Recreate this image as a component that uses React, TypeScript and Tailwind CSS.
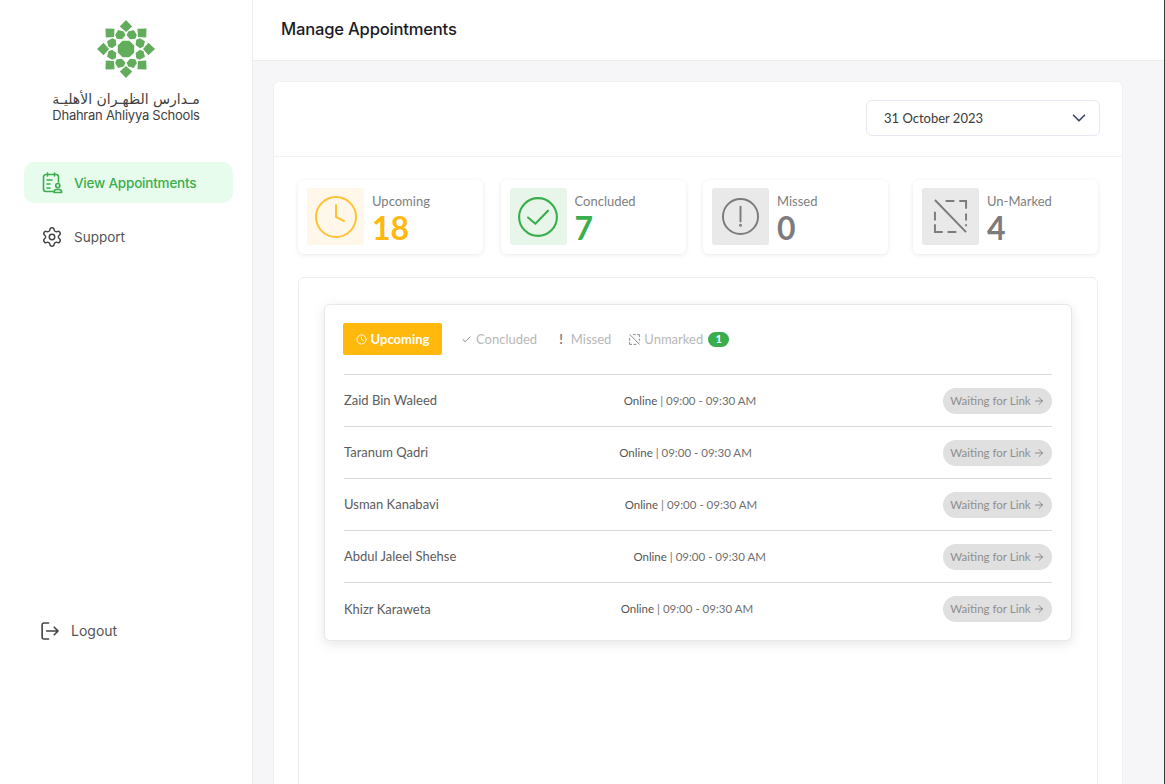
import { ArrowRight, Check, ChevronDown, Clock, Settings } from 'lucide-react'
import type { ReactNode } from 'react'

const lato = "font-['Lato','Liberation_Sans',sans-serif]"

const rows = ['Zaid Bin Waleed', 'Taranum Qadri', 'Usman Kanabavi', 'Abdul Jaleel Shehse', 'Khizr Karaweta']

function Logo() {
  const points = [0, 45, 90, 135, 180, 225, 270, 315]
  return (
    <svg width="58" height="58" viewBox="-29 -29 58 58" fill="#62ad5c">
      <polygon points="-3.4,-8.2 3.4,-8.2 8.2,-3.4 8.2,3.4 3.4,8.2 -3.4,8.2 -8.2,3.4 -8.2,-3.4" />
      {points.map((deg) => (
        <g key={deg} transform={`rotate(${deg})`}>
          <polygon points="0,-29 6.2,-22.4 0,-17 -6.2,-22.4" />
          <polygon transform="rotate(22.5)" points="0,-10.5 4.7,-13 4.7,-17 0,-20.5 -4.7,-17 -4.7,-13" />
        </g>
      ))}
    </svg>
  )
}

function CalendarUser() {
  return (
    <svg width="22" height="22" viewBox="0 0 22 22" fill="none" stroke="#3aae4d" strokeWidth="1.6" strokeLinecap="round" strokeLinejoin="round">
      <path d="M11 19.5H4a2.5 2.5 0 0 1-2.5-2.5V5A2.5 2.5 0 0 1 4 2.5h10A2.5 2.5 0 0 1 16.5 5v5" />
      <path d="M5.5 1v3M12.5 1v3M5 8h5M5 12h3M5 16h3" />
      <circle cx="15.8" cy="13.6" r="2.1" />
      <path d="M12 20.5v-.6a2.6 2.6 0 0 1 2.6-2.4h2.4a2.6 2.6 0 0 1 2.6 2.4v.6z" />
    </svg>
  )
}

function UnmarkedIcon({ size, color, width }: { size: number; color: string; width: number }) {
  return (
    <svg width={size} height={size} viewBox="0 0 36 36" fill="none" stroke={color} strokeWidth={width}>
      <path d="M13 2h9M27 2h7v8M34 15v7M2 13v9M2 26v8h8M15 34h9M34 26v2" />
      <path d="M2 1l32 33" />
    </svg>
  )
}

function StatCard({ label, value, box, valueColor, icon, className }: { label: string; value: string; box: string; valueColor: string; icon: ReactNode; className?: string }) {
  return (
    <div className={`flex h-[74px] w-[185px] items-start gap-[8px] rounded-md bg-white pt-[8px] pl-[9px] shadow-[0_1px_5px_rgba(0,0,0,0.09)] ${className ?? ''}`}>
      <div className={`flex h-[57px] w-[57px] items-center justify-center rounded-[3px] ${box}`}>{icon}</div>
      <div className="flex h-[57px] flex-col">
        <span className="text-[13px] leading-[26px] text-[#808080]">{label}</span>
        <span className={`-mt-[2px] text-[32px] leading-[32px] font-bold ${valueColor}`}>{value}</span>
      </div>
    </div>
  )
}

export default function App() {
  return (
    <div className={`flex h-[784px] w-[1165px] overflow-hidden border-r border-[#3a3a3a] bg-[#f6f6f9] ${lato}`}>
      <aside className="flex w-[253px] shrink-0 flex-col border-r border-[#eeeeee] bg-white font-['Inter',sans-serif]">
        <div className="flex flex-col items-center pt-[20px]">
          <Logo />
          <div className="mt-[11px] font-['DejaVu_Sans',sans-serif] text-[14px] leading-[20px] text-[#3f3f3f]" dir="rtl">مـدارس الظهـران الأهليـة</div>
          <div className="-mt-[2px] text-[13px] leading-[16px] tracking-[-0.25px] text-[#3f3f3f]">Dhahran Ahliyya Schools</div>
        </div>
        <nav className="mt-[39px] flex flex-col px-[24px]">
          <div className="flex h-[41px] w-[209px] items-center gap-[10px] rounded-[10px] bg-[#e8fcee] pt-[1px] pl-[18px] text-[13.5px] font-medium tracking-[-0.2px] text-[#3aae4d]">
            <CalendarUser />
            View Appointments
          </div>
          <div className="mt-[13px] flex h-[41px] items-center gap-[11px] pt-[1px] pl-[17px] text-[13.5px] text-[#555555]">
            <Settings size={22} strokeWidth={1.6} color="#444444" />
            Support
          </div>
        </nav>
        <div className="mt-auto mb-[143px] flex items-center gap-[12px] pl-[41px] text-[14px] text-[#555555]">
          <svg width="18" height="20" viewBox="0 0 19 20" fill="none" stroke="#444444" strokeWidth="1.7" strokeLinecap="round" strokeLinejoin="round">
            <path d="M8 1.5H3A1.8 1.8 0 0 0 1.2 3.3v13.4A1.8 1.8 0 0 0 3 18.5h5" />
            <path d="M6 10h12M14 6l4 4-4 4" />
          </svg>
          Logout
        </div>
      </aside>

      <main className="flex min-w-0 flex-1 flex-col">
        <header className="flex h-[61px] shrink-0 items-center border-b border-[#eeeeee] bg-white pb-[2px] pl-[28px] font-['Inter',sans-serif] text-[16.6px] leading-none font-medium tracking-[-0.2px] text-[#1b1b28]">
          Manage Appointments
        </header>
        <section className="mt-[20px] ml-[20px] w-[850px] flex-1 rounded-t-md border border-b-0 border-[#f0f0f0] bg-white">
          <div className="flex h-[75px] items-start justify-end border-b border-[#f3f3f3] pt-[18px] pr-[22px]">
            <div className="flex h-[36px] w-[234px] items-center justify-between rounded-md border border-[#e6e8f4] pr-[9px] pl-[17px] text-[13px] text-[#3a3a3a]">
              <span className="pt-[2px]">31 October 2023</span>
              <ChevronDown size={22} strokeWidth={1.8} color="#3b4560" />
            </div>
          </div>

          <div className="mt-[23px] ml-[24px] flex w-[800px] gap-[17.5px]">
            <StatCard label="Upcoming" value="18" box="bg-[#fff8ea]" valueColor="text-[#ffb80c]" icon={<Clock size={48} strokeWidth={1} color="#ffc233" />} />
            <StatCard label="Concluded" value="7" box="bg-[#e8f5e9]" valueColor="text-[#3aae4d]" icon={
              <svg width="42" height="42" viewBox="0 0 40 40" fill="none" stroke="#3aae4d" strokeWidth="2">
                <circle cx="20" cy="20" r="18" />
                <path d="M10.5 20.5l7 6 12-12.5" strokeLinecap="round" strokeLinejoin="round" />
              </svg>
            } />
            <StatCard label="Missed" value="0" box="bg-[#e9e9e9]" valueColor="text-[#7c7c7c]" icon={
              <svg width="39" height="39" viewBox="0 0 40 40" fill="none" stroke="#7c7c7c" strokeWidth="2">
                <circle cx="20" cy="20" r="18" />
                <path d="M20 10v15" strokeLinecap="round" />
                <circle cx="20" cy="29" r="0.6" />
              </svg>
            } />
            <StatCard className="ml-auto" label="Un-Marked" value="4" box="bg-[#e9e9e9]" valueColor="text-[#7c7c7c]" icon={<UnmarkedIcon size={35} color="#7c7c7c" width={2} />} />
          </div>

          <div className="mt-[23px] ml-[24px] h-[600px] w-[800px] rounded-md border border-[#ededed] px-[25px] pt-[26px]">
            <div className="w-[748px] rounded-md border border-[#e8e8e8] bg-white px-[19px] pt-[18px] pb-[5px] shadow-[0_3px_12px_rgba(0,0,0,0.1)]">
              <div className="flex h-[52px] items-start border-b border-[#d9d9d9] text-[13px]">
                <div className="-ml-[1px] flex h-[32px] w-[99px] items-center justify-center gap-[4px] rounded-[2px] bg-[#ffb80c] pt-[1px] font-bold text-white">
                  <Clock size={11} strokeWidth={2} />
                  Upcoming
                </div>
                <div className="ml-[19px] flex h-[32px] items-center gap-[4px] pt-[1px] text-[#b8b8b8]">
                  <Check size={11} strokeWidth={2} color="#808080" />
                  Concluded
                </div>
                <div className="ml-[22px] flex h-[32px] items-center gap-[8px] pt-[1px] text-[#b8b8b8]">
                  <span className="font-bold text-[#808080]">!</span>
                  Missed
                </div>
                <div className="ml-[18px] flex h-[32px] items-center gap-[4px] pt-[1px] text-[#b8b8b8]">
                  <UnmarkedIcon size={11} color="#808080" width={3} />
                  Unmarked
                  <span className="ml-[1px] flex h-[15px] w-[21px] items-center justify-center rounded-full bg-[#3aae4d] text-[11px] font-bold text-white">1</span>
                </div>
              </div>
              {rows.map((name, i) => (
                <div key={name} className={`flex h-[52px] items-center justify-between ${i < rows.length - 1 ? 'border-b border-[#d9d9d9]' : ''}`}>
                  <span className="pt-[1px] text-[13px] text-[#5c5c5c]">{name}</span>
                  <span className="text-[11.5px] text-[#707070]">
                    <span className="text-[#555555]">Online</span> | 09:00 - 09:30 AM
                  </span>
                  <span className="flex h-[26px] w-[109px] items-center justify-center gap-[2px] rounded-full bg-[#e0e0e0] text-[11.5px] text-[#8f8f8f]">
                    Waiting for Link
                    <ArrowRight size={12} strokeWidth={1.5} color="#707070" />
                  </span>
                </div>
              ))}
            </div>
          </div>
        </section>
      </main>
    </div>
  )
}
